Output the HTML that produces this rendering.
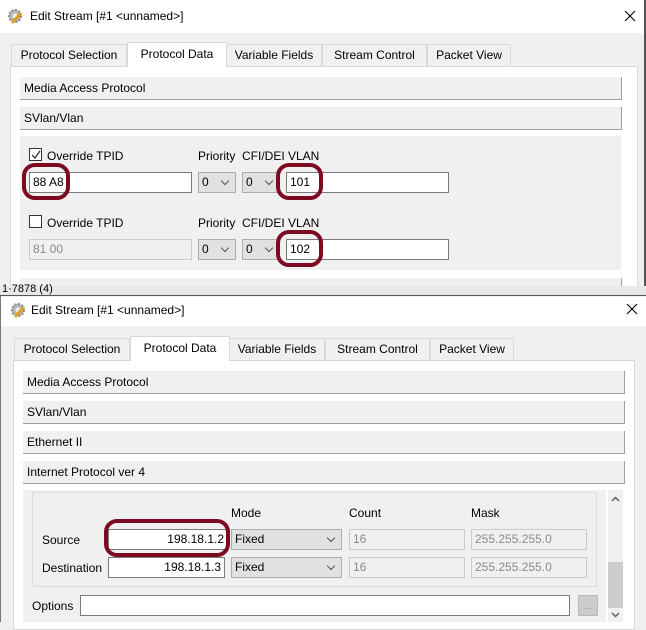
<!DOCTYPE html>
<html><head><meta charset="utf-8"><style>
*{box-sizing:border-box;margin:0;padding:0}
body{width:646px;height:622px;overflow:hidden;background:#f0f0f0;font-family:"Liberation Sans",sans-serif;font-size:12px;color:#000;position:relative}
.a{position:absolute}
.title{background:#fff}
.tab{position:absolute;height:22px;border:1px solid #d9d9d9;border-bottom:none;background:#f0f0f0;text-align:center;line-height:21px;font-size:12px}
.tab.sel{background:#fff;height:25px;line-height:23px;border-color:#d9d9d9;z-index:2}
.panel{position:absolute;background:#fff;border:1px solid #d9d9d9}
.bar{position:absolute;background:#f0f0f0;border-right:1px solid #a0a0a0;border-bottom:1px solid #a0a0a0;height:23px;line-height:22px;padding-left:4px}
.box{position:absolute;background:#f0f0f0}
.inp{position:absolute;background:#fff;border:1px solid #7a7a7a;height:21px;line-height:19px;padding:0 3px}
.dis{background:#f0f0f0;border-color:#cccccc;color:#8a8a8a}
.cmb{position:absolute;background:#e1e1e1;border:1px solid #adadad;height:21px;line-height:19px;padding-left:3px}
.cmb:after{content:"";position:absolute;right:7px;top:5px;width:5px;height:5px;border-right:1px solid #555;border-bottom:1px solid #555;transform:rotate(45deg)}
.ring{position:absolute;border:4px solid #7b0a22;border-radius:13px}
</style></head><body>
<!-- top window -->
<div class="a title" style="left:0;top:0;width:646px;height:33px"></div>
<svg class="a" style="left:6px;top:7px" width="18" height="18" viewBox="0 0 18 18"><circle cx="9" cy="9" r="6" fill="#b8b8b8" stroke="#888" stroke-width="2" stroke-dasharray="2 1.5"/><circle cx="9" cy="9" r="2.5" fill="#eee"/><path d="M6 16 L15 6" stroke="#e0a020" stroke-width="3"/></svg>
<div class="a" style="left:30px;top:9px;font-size:12px">Edit Stream [#1 &lt;unnamed&gt;]</div>
<svg class="a" style="left:624px;top:10px" width="12" height="12"><path d="M1 1 L11 11 M11 1 L1 11" stroke="#000" stroke-width="1.1"/></svg>
<div class="panel" style="left:10px;top:66px;width:628px;height:230px"></div>
<div class="tab" style="left:11px;top:44px;width:116px">Protocol Selection</div>
<div class="tab sel" style="left:127px;top:42px;width:100px">Protocol Data</div>
<div class="tab" style="left:226px;top:44px;width:96px">Variable Fields</div>
<div class="tab" style="left:322px;top:44px;width:105px">Stream Control</div>
<div class="tab" style="left:427px;top:44px;width:84px">Packet View</div>
<div class="bar" style="left:20px;top:77px;width:602px">Media Access Protocol</div>
<div class="bar" style="left:20px;top:107px;width:602px">SVlan/Vlan</div>
<div class="box" style="left:20px;top:136px;width:601px;height:134px"></div>
<div class="a" style="left:29px;top:148px;width:13px;height:13px;border:1px solid #333;background:#fff"></div>
<svg class="a" style="left:31px;top:150px" width="10" height="10"><path d="M1 5 L4 8 L9 1" fill="none" stroke="#222" stroke-width="1.2"/></svg>
<div class="a" style="left:47px;top:149px">Override TPID</div>
<div class="a" style="left:198px;top:149px">Priority</div><div class="a" style="left:242px;top:149px">CFI/DEI</div><div class="a" style="left:288px;top:149px">VLAN</div>
<div class="inp" style="left:29px;top:172px;width:163px">88 A8</div>
<div class="cmb" style="left:198px;top:172px;width:38px">0</div>
<div class="cmb" style="left:242px;top:172px;width:38px">0</div>
<div class="inp" style="left:286px;top:172px;width:163px">101</div>
<div class="a" style="left:29px;top:215px;width:13px;height:13px;border:1px solid #333;background:#fff"></div>
<div class="a" style="left:47px;top:216px">Override TPID</div>
<div class="a" style="left:198px;top:216px">Priority</div><div class="a" style="left:242px;top:216px">CFI/DEI</div><div class="a" style="left:288px;top:216px">VLAN</div>
<div class="inp dis" style="left:29px;top:239px;width:163px">81 00</div>
<div class="cmb" style="left:198px;top:239px;width:38px">0</div>
<div class="cmb" style="left:242px;top:239px;width:38px">0</div>
<div class="inp" style="left:286px;top:239px;width:163px">102</div>
<div class="bar" style="left:20px;top:278px;width:602px;height:14px"></div>
<div class="ring" style="left:22px;top:163px;width:48px;height:37px"></div>
<div class="ring" style="left:276px;top:163px;width:47px;height:37px"></div>
<div class="ring" style="left:276px;top:230px;width:47px;height:37px"></div>
<div class="a" style="left:644px;top:0;width:2px;height:295px;background:#555"></div>
<!-- status strip -->
<div class="a" style="left:0;top:286px;width:646px;height:10px;background:#e8e8e8;border-bottom:1px solid #555"></div>
<div class="a" style="left:2px;top:284px;font-size:11px;line-height:11px">1·7878 (4)</div>
<!-- second window -->
<div class="a title" style="left:1px;top:297px;width:645px;height:29px"></div>
<div class="a" style="left:0;top:296px;width:1px;height:326px;background:#777"></div>
<svg class="a" style="left:9px;top:301px" width="18" height="18" viewBox="0 0 18 18"><circle cx="9" cy="9" r="6" fill="#b8b8b8" stroke="#888" stroke-width="2" stroke-dasharray="2 1.5"/><circle cx="9" cy="9" r="2.5" fill="#eee"/><path d="M6 16 L15 6" stroke="#e0a020" stroke-width="3"/></svg>
<div class="a" style="left:31px;top:303px">Edit Stream [#1 &lt;unnamed&gt;]</div>
<svg class="a" style="left:626px;top:303px" width="12" height="12"><path d="M1 1 L11 11 M11 1 L1 11" stroke="#000" stroke-width="1.1"/></svg>
<div class="panel" style="left:13px;top:360px;width:622px;height:270px"></div>
<div class="tab" style="left:14px;top:338px;width:116px">Protocol Selection</div>
<div class="tab sel" style="left:130px;top:336px;width:100px">Protocol Data</div>
<div class="tab" style="left:229px;top:338px;width:96px">Variable Fields</div>
<div class="tab" style="left:325px;top:338px;width:105px">Stream Control</div>
<div class="tab" style="left:430px;top:338px;width:84px">Packet View</div>
<div class="bar" style="left:23px;top:371px;width:602px">Media Access Protocol</div>
<div class="bar" style="left:23px;top:401px;width:602px">SVlan/Vlan</div>
<div class="bar" style="left:23px;top:431px;width:602px">Ethernet II</div>
<div class="bar" style="left:23px;top:461px;width:602px">Internet Protocol ver 4</div>
<div class="box" style="left:23px;top:490px;width:583px;height:132px"></div>
<div class="a" style="left:32px;top:492px;width:565px;height:95px;border:1px solid #dcdcdc"></div>
<div class="a" style="left:231px;top:506px">Mode</div><div class="a" style="left:349px;top:506px">Count</div><div class="a" style="left:471px;top:506px">Mask</div>
<div class="a" style="left:42px;top:533px">Source</div>
<div class="inp" style="left:108px;top:529px;width:120px;text-align:right">198.18.1.2</div>
<div class="cmb" style="left:231px;top:529px;width:111px">Fixed</div>
<div class="inp dis" style="left:349px;top:529px;width:116px">16</div>
<div class="inp dis" style="left:471px;top:529px;width:116px">255.255.255.0</div>
<div class="a" style="left:42px;top:561px">Destination</div>
<div class="inp" style="left:108px;top:557px;width:117px;text-align:right">198.18.1.3</div>
<div class="cmb" style="left:231px;top:557px;width:111px">Fixed</div>
<div class="inp dis" style="left:349px;top:557px;width:116px">16</div>
<div class="inp dis" style="left:471px;top:557px;width:116px">255.255.255.0</div>
<div class="a" style="left:32px;top:599px">Options</div>
<div class="inp" style="left:80px;top:595px;width:490px"></div>
<div class="a" style="left:578px;top:595px;width:20px;height:21px;background:#ccc;border:1px solid #bbb;color:#888;font-size:9px;text-align:center;line-height:20px">...</div>
<div class="a" style="left:608px;top:490px;width:15px;height:132px;background:#f0f0f0"></div>
<div class="a" style="left:608px;top:562px;width:15px;height:46px;background:#cdcdcd"></div>
<svg class="a" style="left:610px;top:495px" width="11" height="8"><path d="M2 6 L5.5 2.5 L9 6" fill="none" stroke="#606060" stroke-width="1.5"/></svg>
<svg class="a" style="left:610px;top:611px" width="11" height="8"><path d="M2 2 L5.5 5.5 L9 2" fill="none" stroke="#606060" stroke-width="1.5"/></svg>
<div class="ring" style="left:104px;top:519px;width:126px;height:38px"></div>
</body></html>
